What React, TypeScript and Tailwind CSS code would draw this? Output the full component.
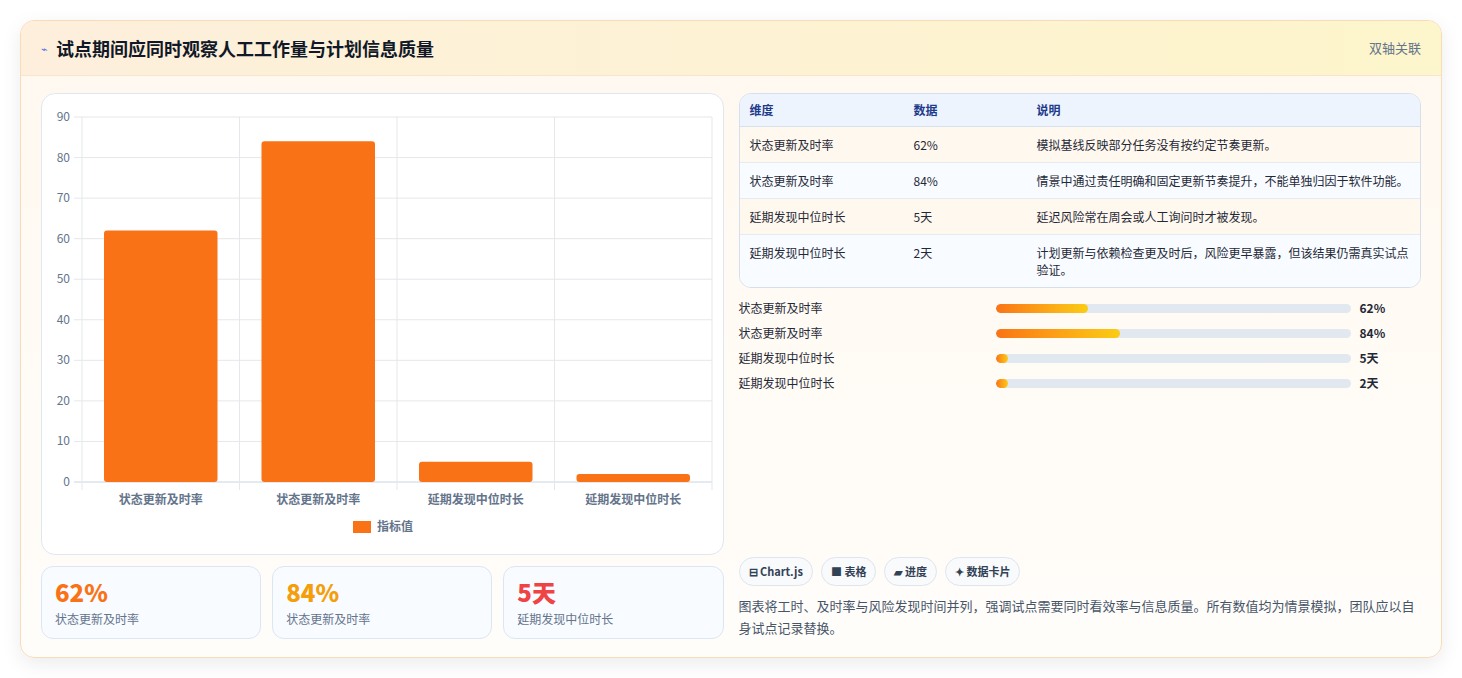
const bars = [
  { label: "状态更新及时率", value: 62 },
  { label: "状态更新及时率", value: 84 },
  { label: "延期发现中位时长", value: 5 },
  { label: "延期发现中位时长", value: 2 },
];

const rows = [
  { dim: "状态更新及时率", data: "62%", note: "模拟基线反映部分任务没有按约定节奏更新。", bg: "bg-[#fff8ee]" },
  { dim: "状态更新及时率", data: "84%", note: "情景中通过责任明确和固定更新节奏提升，不能单独归因于软件功能。", bg: "bg-[#f8fbff]" },
  { dim: "延期发现中位时长", data: "5天", note: "延迟风险常在周会或人工询问时才被发现。", bg: "bg-[#fff8ee]" },
  { dim: "延期发现中位时长", data: "2天", note: "计划更新与依赖检查更及时后，风险更早暴露，但该结果仍需真实试点验证。", bg: "bg-[#f8fbff]" },
];

const progress = [
  { label: "状态更新及时率", text: "62%", pct: 26 },
  { label: "状态更新及时率", text: "84%", pct: 35 },
  { label: "延期发现中位时长", text: "5天", pct: 3.5 },
  { label: "延期发现中位时长", text: "2天", pct: 3.5 },
];

const font = { fontFamily: '"Noto Sans CJK SC", "Noto Sans", sans-serif' };

function BarChart() {
  const L = 40, R = 670, T = 23, B = 388;
  const cw = (R - L) / 4;
  const y = (v: number) => B - ((B - T) * v) / 90;
  return (
    <svg width="683" height="462" viewBox="0 0 683 462" style={font}>
      {Array.from({ length: 10 }, (_, i) => (
        <g key={i}>
          <line x1={L - 8} x2={R} y1={y(i * 10)} y2={y(i * 10)} stroke={i === 0 ? "#cbd5e1" : "#e5e7eb"} />
          <text x={28} y={y(i * 10) + 4} fontSize="12" fill="#64748b" textAnchor="end">{i * 10}</text>
        </g>
      ))}
      {[0, 1, 2, 3, 4].map((i) => (
        <line key={i} x1={L + i * cw} x2={L + i * cw} y1={T} y2={B + 8} stroke="#e5e7eb" />
      ))}
      {bars.map((b, i) => (
        <g key={i}>
          <rect x={L + i * cw + 22} y={y(b.value)} width={cw - 44} height={B - y(b.value)} rx="3" fill="#f97316" />
          <text x={L + i * cw + cw / 2} y={410} fontSize="12" fontWeight="600" fill="#64748b" textAnchor="middle">{b.label}</text>
        </g>
      ))}
      <rect x={311} y={427} width={18} height={12} fill="#f97316" />
      <text x={335} y={437} fontSize="12" fontWeight="600" fill="#64748b">指标值</text>
    </svg>
  );
}

export default function App() {
  return (
    <div className="min-h-[678px] bg-white p-5" style={font}>
      <div className="rounded-[14px] border border-[#f8dcb8] bg-gradient-to-b from-[#fff8ef] to-[#fffdfa] shadow-[0_6px_20px_rgba(0,0,0,0.08)] overflow-hidden">
        <div className="h-[55px] flex items-center justify-between px-5 bg-gradient-to-r from-[#fdefdc] to-[#fdf5cb] border-b border-[#f6e6cf]">
          <div className="flex items-center gap-2">
            <span className="text-[#4f6ee8] text-[11px]">⌁</span>
            <h1 className="text-[18px] font-bold text-[#111827]">试点期间应同时观察人工工作量与计划信息质量</h1>
          </div>
          <span className="text-[13px] text-[#64748b]">双轴关联</span>
        </div>
        <div className="grid grid-cols-2 gap-[15px] px-5 pt-[17px] pb-[18px]">
          <div className="flex flex-col gap-[11px]">
            <div className="h-[462px] rounded-[14px] border border-[#dfe7f1] bg-white">
              <BarChart />
            </div>
            <div className="grid grid-cols-3 gap-[11px]">
              {[
                { v: "62%", c: "text-[#f97316]", l: "状态更新及时率" },
                { v: "84%", c: "text-[#f59e0b]", l: "状态更新及时率" },
                { v: "5天", c: "text-[#ef4444]", l: "延期发现中位时长" },
              ].map((s, i) => (
                <div key={i} className="h-[73px] rounded-[12px] border border-[#dbe6f3] bg-[#f8fbff] px-[13px] pt-[10px]">
                  <div className={`text-[24px] font-extrabold leading-[30px] ${s.c}`}>{s.v}</div>
                  <div className="text-[12px] text-[#64748b] mt-[3px]">{s.l}</div>
                </div>
              ))}
            </div>
          </div>
          <div className="flex flex-col">
            <div className="rounded-[12px] border border-[#d6e0ec] overflow-hidden text-[12px]">
              <div className="grid grid-cols-[164px_123px_1fr] h-[33px] items-center px-[10px] bg-[#edf4fd] border-b border-[#d6e0ec] font-semibold text-[#1e3a8a]">
                <span>维度</span><span>数据</span><span>说明</span>
              </div>
              {rows.map((r, i) => (
                <div key={i} className={`grid grid-cols-[164px_123px_1fr] px-[10px] py-[9px] leading-[17px] text-[#1f2937] ${r.bg} ${i < 3 ? "border-b border-[#e5ebf2]" : ""}`}>
                  <span>{r.dim}</span><span>{r.data}</span><span>{r.note}</span>
                </div>
              ))}
            </div>
            <div className="mt-[11px] flex flex-col gap-[7px]">
              {progress.map((p, i) => (
                <div key={i} className="flex items-center h-[18px] text-[12px]">
                  <span className="w-[257px] text-[#1f2937]">{p.label}</span>
                  <div className="w-[355px] h-[9px] rounded-full bg-[#e2e8f0] overflow-hidden">
                    <div className="h-full rounded-full bg-gradient-to-r from-[#f97316] to-[#facc15]" style={{ width: `${p.pct}%` }} />
                  </div>
                  <span className="ml-[9px] font-bold text-[#1f2937]">{p.text}</span>
                </div>
              ))}
            </div>
            <div className="mt-auto flex gap-[8px]">
              {["⊟ Chart.js", "■ 表格", "▰ 进度", "✦ 数据卡片"].map((c) => (
                <span key={c} className="h-[29px] px-[9px] flex items-center rounded-full border border-[#dfe5ee] bg-[#f8fafc] text-[11px] font-semibold text-[#334155]">{c}</span>
              ))}
            </div>
            <p className="mt-[9px] text-[13px] leading-[22px] text-[#475569]">图表将工时、及时率与风险发现时间并列，强调试点需要同时看效率与信息质量。所有数值均为情景模拟，团队应以自身试点记录替换。</p>
          </div>
        </div>
      </div>
    </div>
  );
}
